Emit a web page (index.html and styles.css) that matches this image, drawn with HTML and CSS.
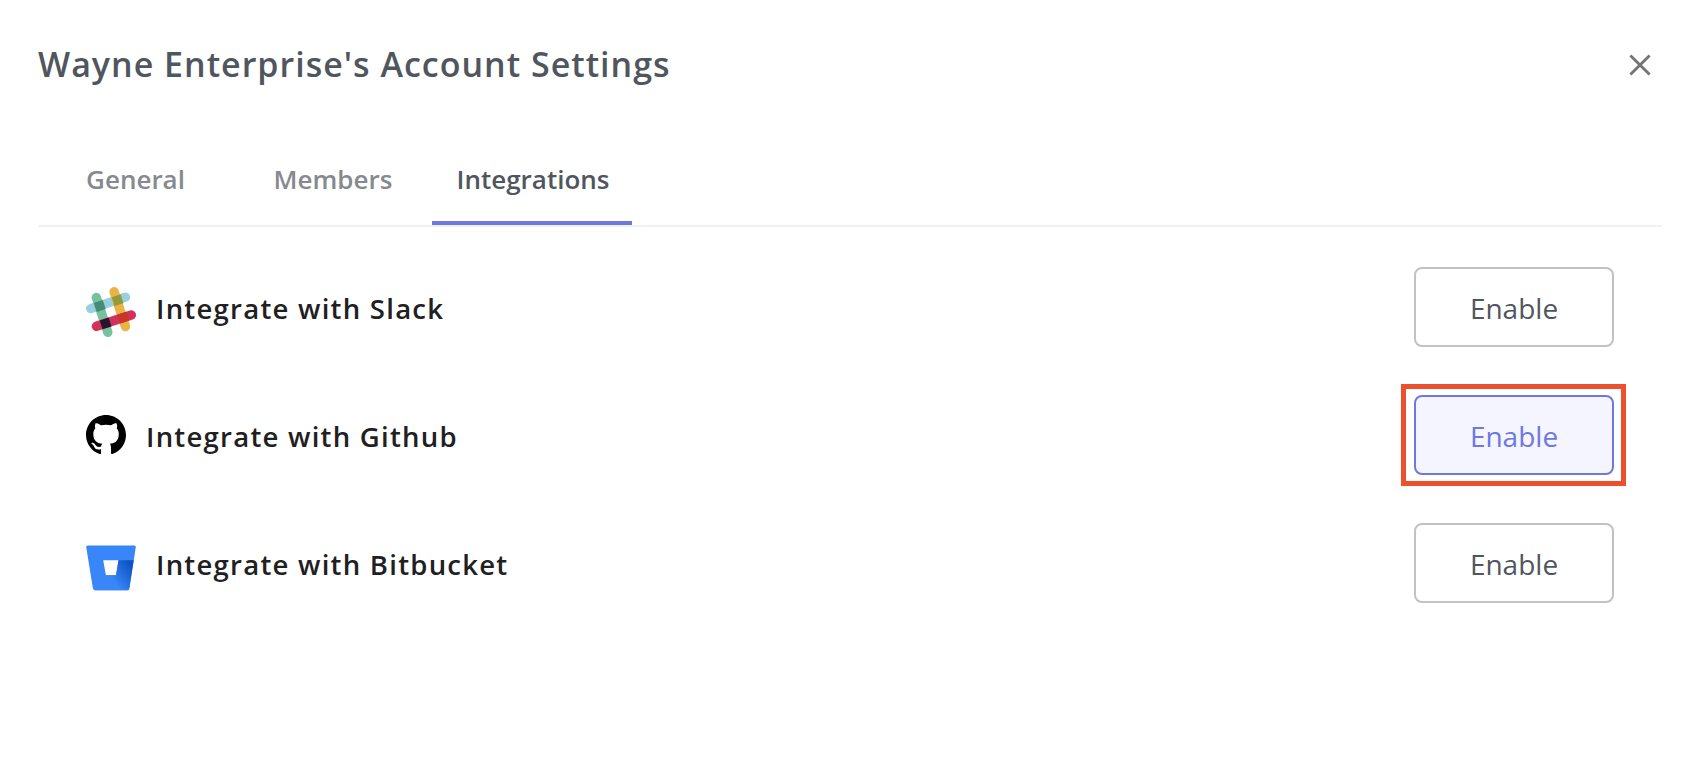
FILE: index.html
```html
<!DOCTYPE html>
<html lang="en">
<head>
<meta charset="utf-8">
<title>Account Settings</title>
<link rel="stylesheet" href="styles.css">
</head>
<body>
<main class="settings">
  <header class="header">
    <h1 class="title">Wayne Enterprise's Account Settings</h1>
    <button class="close" aria-label="Close">
      <svg width="22" height="22" viewBox="0 0 22 22"><path d="M1.4 1.4 20.6 20.6M20.6 1.4 1.4 20.6" fill="none" stroke="#737476" stroke-width="2.8"/></svg>
    </button>
  </header>
  <nav class="tabs">
    <a class="tab tab-first">General</a>
    <a class="tab">Members</a>
    <a class="tab tab-active">Integrations</a>
  </nav>
  <ul class="list">
    <li class="row">
      <svg class="icon icon-slack" width="50" height="50" viewBox="6 7 50 50">
        <g fill="none" stroke-width="9.4" stroke-linecap="round">
          <path stroke="#97d0de" d="M10.7 28.6 45.5 17.1"/>
          <path stroke="#77c19f" d="M16.3 17.4 27.8 52.3"/>
          <path stroke="#e8b446" d="M34.1 11.7 45.4 46.5"/>
          <path stroke="#d2315a" d="M16.4 46.3 51.3 35"/>
        </g>
        <path fill="#458b75" d="M13.9 23 22.8 20 25.7 29 16.8 32z"/>
        <path fill="#949a3c" d="M31.7 17.2 40.6 14.2 43.5 23.2 34.6 26.1z"/>
        <path fill="#25152f" d="M19.7 40.4 28.6 37.5 31.5 46.4 22.6 49.3z"/>
        <path fill="#ca3527" d="M37.5 34.6 46.4 31.7 49.3 40.6 40.4 43.5z"/>
      </svg>
      <span class="name">Integrate with Slack</span>
      <button class="enable">Enable</button>
    </li>
    <li class="row">
      <svg class="icon" width="40" height="40" viewBox="0 0 16 16"><path fill="#000" d="M8 0C3.58 0 0 3.58 0 8c0 3.54 2.29 6.53 5.47 7.59.4.07.55-.17.55-.38 0-.19-.01-.82-.01-1.49-2.01.37-2.53-.49-2.69-.94-.09-.23-.48-.94-.82-1.13-.28-.15-.68-.52-.01-.53.63-.01 1.08.58 1.23.82.72 1.21 1.87.87 2.33.66.07-.52.28-.87.51-1.07-1.78-.2-3.64-.89-3.64-3.95 0-.87.31-1.59.82-2.15-.08-.2-.36-1.02.08-2.12 0 0 .67-.21 2.2.82.64-.18 1.32-.27 2-.27s1.36.09 2 .27c1.53-1.04 2.2-.82 2.2-.82.44 1.1.16 1.92.08 2.12.51.56.82 1.27.82 2.15 0 3.07-1.87 3.75-3.65 3.95.29.25.54.73.54 1.48 0 1.07-.01 1.93-.01 2.2 0 .21.15.46.55.38A8.01 8.01 0 0 0 16 8c0-4.42-3.58-8-8-8z"/></svg>
      <span class="name">Integrate with Github</span>
      <span class="highlight"><button class="enable enable-active">Enable</button></span>
    </li>
    <li class="row">
      <svg class="icon icon-bitbucket" width="50" height="46" viewBox="0 0 50 46">
        <defs><linearGradient id="shade" x1="49" y1="16" x2="26" y2="34" gradientUnits="userSpaceOnUse"><stop offset=".18" stop-color="#0c53c5"/><stop offset="1" stop-color="#3886f7"/></linearGradient></defs>
        <path fill="#3886f7" fill-rule="evenodd" d="M1.7 .4H48.3Q50 .4 49.8 2.1L43.3 43.4Q43 45.3 41 45.3H9.4Q7.3 45.3 6.9 43.3L.2 2.1Q0 .4 1.7 .4zM17.2 15.3 19.9 30.2H30L32.5 15.3z"/>
        <path fill="url(#shade)" d="M32.5 15.3H47.7L43.3 43.4Q43 45.3 41 45.3H9.4Q8.5 45.3 7.8 44.7L19.9 30.2H30z"/>
      </svg>
      <span class="name">Integrate with Bitbucket</span>
      <button class="enable">Enable</button>
    </li>
  </ul>
</main>
</body>
</html>
```
FILE: styles.css
```css
* {
  box-sizing: border-box;
}

body {
  margin: 0;
  background: #fff;
  font-family: "Open Sans", sans-serif;
}

.settings {
  padding: 37px 41px 0 38px;
}

.header {
  display: flex;
  justify-content: space-between;
  align-items: center;
  height: 56px;
}

.title {
  margin: 0;
  padding-bottom: 2px;
  font-size: 34px;
  font-weight: 600;
  line-height: 54px;
  letter-spacing: 1px;
  color: #50565e;
}

.close {
  display: flex;
  padding: 0;
  margin-right: 11px;
  border: 0;
  background: none;
}

.tabs {
  display: flex;
  height: 90px;
  margin-top: 44px;
  border-bottom: 2px solid #f1f1f1;
}

.tab {
  width: 200px;
  height: 88px;
  padding-left: 2px;
  line-height: 84px;
  text-align: center;
  font-size: 26px;
  font-weight: 600;
  color: #868a90;
}

.tab-first {
  width: 194px;
  padding-left: 1px;
}

.tab-active {
  color: #50565e;
  border-bottom: 4px solid #6f77e3;
}

.list {
  display: flex;
  flex-direction: column;
  gap: 48px;
  margin: 40px 0 0;
  padding: 0 48px;
  list-style: none;
}

.row {
  display: flex;
  align-items: center;
  height: 80px;
}

.icon {
  flex: none;
  margin-right: 20px;
}

.icon-slack {
  margin-top: 10px;
}

.icon-bitbucket {
  margin-top: 10px;
}

.name {
  flex: 1;
  padding-top: 2px;
  font-size: 27.5px;
  font-weight: 600;
  letter-spacing: 1.25px;
  color: #1f2022;
}

.enable {
  width: 200px;
  height: 80px;
  padding: 2px 0 0;
  border: 2px solid #c2c2c2;
  border-radius: 8px;
  background: #fff;
  font-family: inherit;
  font-size: 28px;
  color: #50565e;
}

.enable-active {
  border-color: #6f77e3;
  background: #f4f5ff;
  color: #6f77e3;
}

.highlight {
  display: flex;
  margin: 0 -12px 0 0;
  padding: 6px 7px 6px 8px;
  border: 5px solid #ed502e;
}
```
